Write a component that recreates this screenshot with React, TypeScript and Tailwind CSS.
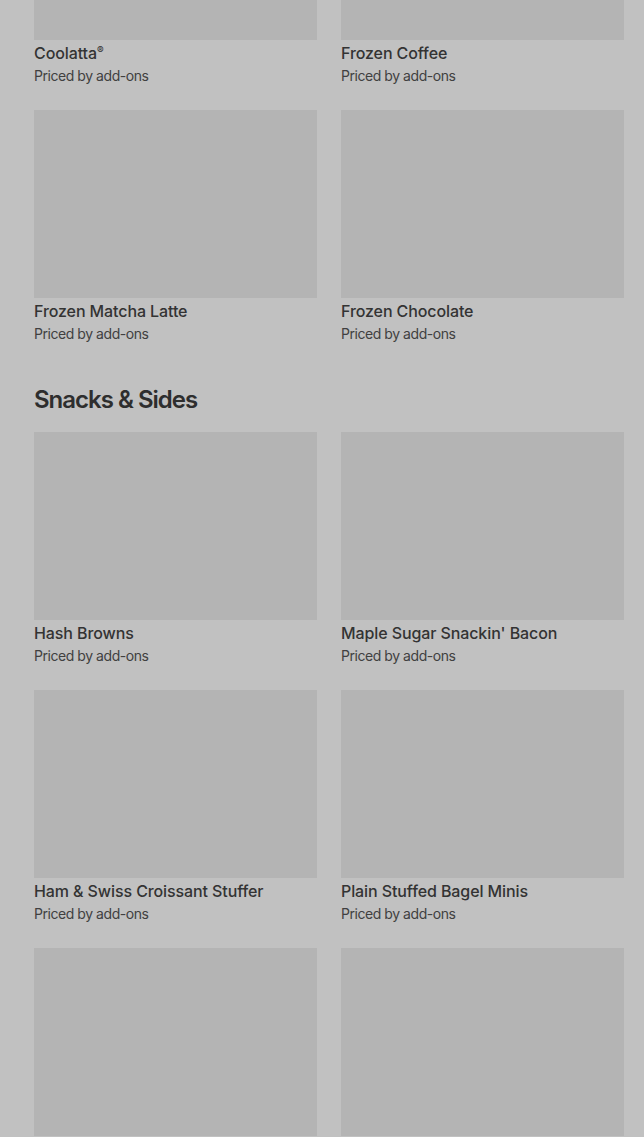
import React from "react";

type Item = { name: string; sup?: string };

const drinks: Item[] = [
  { name: "Coolatta", sup: "®" },
  { name: "Frozen Coffee" },
  { name: "Frozen Matcha Latte" },
  { name: "Frozen Chocolate" },
];

const snacks: Item[] = [
  { name: "Hash Browns" },
  { name: "Maple Sugar Snackin' Bacon" },
  { name: "Ham & Swiss Croissant Stuffer" },
  { name: "Plain Stuffed Bagel Minis" },
  { name: "" },
  { name: "" },
];

function Card({ item }: { item: Item }) {
  return (
    <div className="flex flex-col">
      <div className="h-[188px] w-full bg-[#b4b4b4]" />
      {item.name && (
        <>
          <div className="mt-[3px] text-[16px] leading-[20px] font-medium text-[#333333] tracking-[-0.1px]">
            {item.name}
            {item.sup && <sup className="text-[10px] font-medium">{item.sup}</sup>}
          </div>
          <div className="mt-[3px] text-[14px] leading-[20px] text-[#404040] tracking-[-0.45px]">
            Priced by add-ons
          </div>
        </>
      )}
    </div>
  );
}

export default function App() {
  return (
    <div
      className="w-[644px] h-[1137px] overflow-hidden bg-[#c1c1c1]"
      style={{ fontFamily: "Inter, 'Noto Sans', sans-serif" }}
    >
      <div className="-mt-[148px] pl-[34px] pr-[20px]">
        <div className="grid grid-cols-2 gap-x-6 gap-y-6">
          {drinks.map((d, i) => (
            <Card key={i} item={d} />
          ))}
        </div>
        <h2 className="mt-[40px] mb-[16px] text-[24px] leading-[32px] font-semibold text-[#2e2e2e] tracking-[-1px]">
          Snacks &amp; Sides
        </h2>
        <div className="grid grid-cols-2 gap-x-6 gap-y-6">
          {snacks.map((d, i) => (
            <Card key={i} item={d} />
          ))}
        </div>
      </div>
    </div>
  );
}
